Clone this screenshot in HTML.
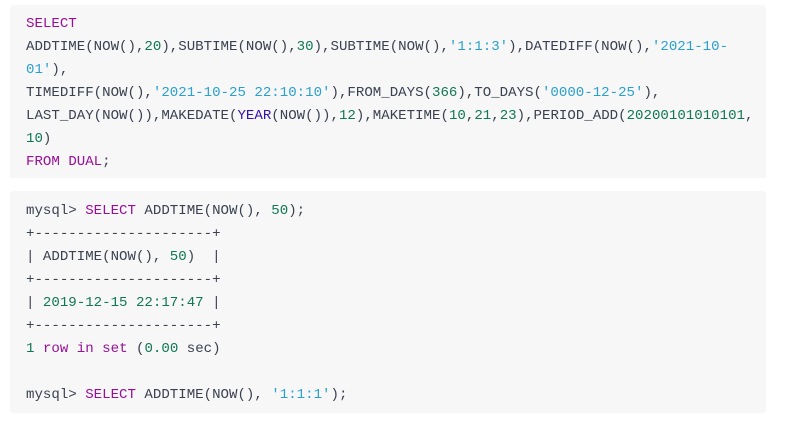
<!DOCTYPE html>
<html><head><meta charset="utf-8"><style>
body{margin:0;background:#fff;width:795px;height:423px;overflow:hidden}
.b{position:absolute;left:10px;width:756px;background:#f7f7f7;border-radius:3px;}
pre{margin:0;position:absolute;left:16px;font-family:"Liberation Mono",monospace;font-size:14.1px;line-height:23px;color:#3a4150;letter-spacing:0}
.k{color:#990f99}.n{color:#117755}.s{color:#2aa0cf}.f{color:#3311aa}
</style></head><body>
<div class="b" style="top:5px;height:173px"><pre style="top:8px"><span class="k">SELECT</span>
ADDTIME(NOW(),<span class="n">20</span>),SUBTIME(NOW(),<span class="n">30</span>),SUBTIME(NOW(),<span class="s">'1:1:3'</span>),DATEDIFF(NOW(),<span class="s">'2021-10-</span>
<span class="s">01'</span>),
TIMEDIFF(NOW(),<span class="s">'2021-10-25 22:10:10'</span>),FROM_DAYS(<span class="n">366</span>),TO_DAYS(<span class="s">'0000-12-25'</span>),
LAST_DAY(NOW()),MAKEDATE(<span class="f">YEAR</span>(NOW()),<span class="n">12</span>),MAKETIME(<span class="n">10</span>,<span class="n">21</span>,<span class="n">23</span>),PERIOD_ADD(<span class="n">20200101010101</span>,
<span class="n">10</span>)
<span class="k">FROM</span> <span class="k">DUAL</span>;</pre></div>
<div class="b" style="top:191px;height:222px"><pre style="top:9px">mysql&gt; <span class="k">SELECT</span> ADDTIME(NOW(), <span class="n">50</span>);
+---------------------+
| ADDTIME(NOW(), <span class="n">50</span>)  |
+---------------------+
| <span class="n">2019-12-15 22:17:47</span> |
+---------------------+
<span class="n">1</span> <span class="k">row</span> <span class="k">in</span> <span class="k">set</span> (<span class="n">0.00</span> sec)

mysql&gt; <span class="k">SELECT</span> ADDTIME(NOW(), <span class="s">'1:1:1'</span>);</pre></div>
</body></html>
